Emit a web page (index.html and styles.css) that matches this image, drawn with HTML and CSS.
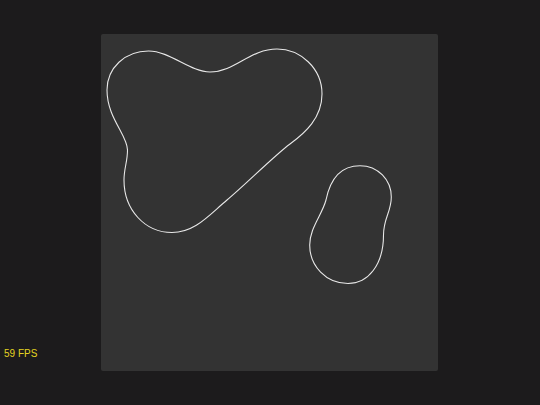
FILE: index.html
```html
<!DOCTYPE html>
<html>
<head>
<meta charset="utf-8">
<link rel="stylesheet" href="styles.css">
</head>
<body>
<div class="stage">
  <svg class="canvas" width="337" height="337" viewBox="101 34 337 337">
    <path class="blob" d="M210,72 C235,72 250,49 277,49 C300,49 322,68 322,94 C322,118 305,133 290,144 C275,155 245,185 227,200 C209,215 195,232.5 172,232.5 C145,232.5 124,210 124,180 C124,168 127.5,162 127.5,150 C127.5,135 107,118 107,90 C107,68 125,51 148.5,51 C170,51 190,72 210,72 Z"/>
    <path class="blob" d="M360,165.7 C378,165.7 391.3,180 391.3,197 C391.3,212 383.5,218 383.5,235 C383.5,265 368,283.5 348,283.5 C326,283.5 309.7,266 309.7,245 C309.7,228 322,215 326,200 C330,180 340,165.7 360,165.7 Z"/>
  </svg>
</div>
<div class="fps">59 FPS</div>
</body>
</html>
```
FILE: styles.css
```css
html, body {
  margin: 0;
  padding: 0;
  width: 540px;
  height: 405px;
  background: #1c1b1c;
  overflow: hidden;
  font-family: "Liberation Sans", Arial, sans-serif;
}
.stage {
  padding: 34px 0 0 101px;
}
.canvas {
  display: block;
  background: #333333;
  border-radius: 2px;
}
.blob {
  fill: none;
  stroke: #e8e8e8;
  stroke-width: 1.1;
}
.fps {
  position: absolute;
  left: 4px;
  top: 349px;
  font-size: 10px;
  line-height: 10px;
  color: #e3d321;
}
```
